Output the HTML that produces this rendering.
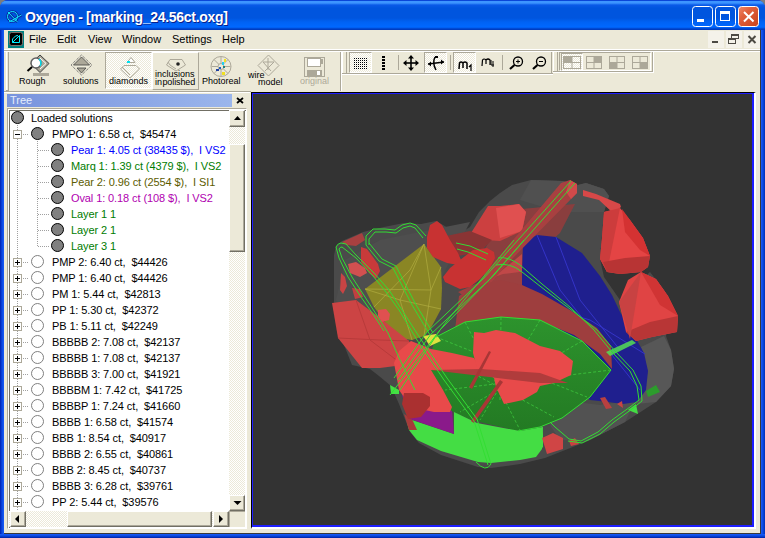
<!DOCTYPE html>
<html><head><meta charset="utf-8">
<style>
*{margin:0;padding:0;box-sizing:border-box}
html,body{width:765px;height:538px;overflow:hidden;background:#7d7d7d}
body{position:relative;font-family:"Liberation Sans",sans-serif;font-size:11px;color:#000}
.a{position:absolute}
svg{position:absolute;left:0;top:0}
#frame{left:0;top:0;width:765px;height:538px;background:#0842d8;border-radius:8px 8px 0 0}
#bl{left:0;top:30px;width:4px;height:508px;background:linear-gradient(90deg,#0020b0,#0a48e0 50%,#1a5cf8)}
#br{left:761px;top:30px;width:4px;height:508px;background:linear-gradient(90deg,#1a5cf8,#0a48e0 50%,#0030b8)}
#bb{left:0;top:534px;width:765px;height:4px;background:linear-gradient(#1a5cf8,#0a48e0 50%,#0020a0)}
#title{left:0;top:0;width:765px;height:30px;border-radius:8px 8px 0 0;background:linear-gradient(#0a46d8 0px,#0a46d8 1px,#3d95ff 1px,#3d95ff 3px,#0a5ae8 5px,#0055de 8px,#0055de 18px,#0062f4 22px,#0068ff 27px,#0058e8 28px,#003cc0 29px,#003cc0 30px)}
#ttext{left:25px;top:9px;font-weight:bold;font-size:14px;color:#fff;text-shadow:1px 1px 0 #0a1e8a;white-space:nowrap;letter-spacing:-0.3px}
#menubar{left:4px;top:30px;width:757px;height:20px;background:#ece9d8}
.mi{top:5px;white-space:nowrap}
#tb{left:4px;top:50px;width:757px;height:41px;background:#ece9d8;border-top:1px solid #fff}
#tree{left:4px;top:91px;width:247px;height:443px;background:#ece9d8}
#view{left:251px;top:91px;width:510px;height:443px;background:#ece9d8}
#vpo{left:251px;top:92px;width:505px;height:437px;border:2px solid #fff;border-top:1px solid #000;border-left:1px solid #000}
#vpi{left:252px;top:93px;width:502px;height:434px;background:#333333;border:1px solid #1e1eff;border-width:1px 2px 2px 1px}
#ttl{left:7px;top:94px;width:225px;height:13px;background:linear-gradient(90deg,#7893dd,#9bb6ec)}
#ttlt{left:10px;top:94px;color:#e6eefc;font-size:11px;line-height:13px}
#list{left:7px;top:108px;width:240px;height:421px;background:#fff;border:1px solid #aca899;border-right-color:#fff;border-bottom-color:#fff;overflow:hidden}
#listi{left:1px;top:1px;width:238px;height:419px;border:1px solid #716f64;border-right-color:#ece9d8;border-bottom-color:#ece9d8}
.tr{white-space:nowrap;line-height:16px;letter-spacing:-0.1px}
</style></head><body>
<div class="a" id="frame"></div>
<div class="a" id="bl"></div><div class="a" id="br"></div><div class="a" id="bb"></div>
<div class="a" id="title"></div>
<div class="a" id="ttext">Oxygen - [marking_24.56ct.oxg]</div>
<div class="a" id="menubar"></div>
<div class="a mi" style="left:29px;top:33px">File</div>
<div class="a mi" style="left:57px;top:33px">Edit</div>
<div class="a mi" style="left:88px;top:33px">View</div>
<div class="a mi" style="left:122px;top:33px">Window</div>
<div class="a mi" style="left:172px;top:33px">Settings</div>
<div class="a mi" style="left:222px;top:33px">Help</div>
<div class="a" id="tb"></div>
<div class="a" style="left:4px;top:49px;width:757px;height:1px;background:#fff"></div>
<div class="a" style="left:4px;top:50px;width:757px;height:1px;background:#aca899"></div>
<div class="a" style="left:4px;top:51px;width:757px;height:1px;background:#fff"></div>
<!-- toolbar 1 grip & edges -->
<div class="a" style="left:6px;top:52px;width:1px;height:39px;background:#fff"></div>
<div class="a" style="left:8px;top:52px;width:1px;height:39px;background:#aca899"></div>
<div class="a" style="left:6px;top:90px;width:3px;height:1px;background:#aca899"></div>
<div class="a" style="left:340px;top:52px;width:1px;height:39px;background:#aca899"></div>
<div class="a" style="left:341px;top:52px;width:1px;height:39px;background:#fff"></div>
<!-- toolbar 2 -->
<div class="a" style="left:342px;top:52px;width:1px;height:21px;background:#fff"></div>
<div class="a" style="left:346px;top:52px;width:1px;height:21px;background:#aca899"></div>
<div class="a" style="left:342px;top:73px;width:211px;height:1px;background:#aca899"></div>
<div class="a" style="left:342px;top:74px;width:211px;height:1px;background:#fff"></div>
<div class="a" style="left:551px;top:52px;width:1px;height:21px;background:#aca899"></div>
<!-- toolbar 3 -->
<div class="a" style="left:553px;top:52px;width:1px;height:21px;background:#fff"></div>
<div class="a" style="left:557px;top:52px;width:1px;height:21px;background:#aca899"></div>
<div class="a" style="left:553px;top:71px;width:101px;height:1px;background:#aca899"></div>
<div class="a" style="left:553px;top:72px;width:101px;height:1px;background:#fff"></div>
<div class="a" style="left:652px;top:52px;width:1px;height:19px;background:#aca899"></div>
<div class="a" style="left:653px;top:52px;width:1px;height:20px;background:#fff"></div>
<style>
.tbt{font-size:9px;line-height:10px;white-space:nowrap;color:#000}
.chk{background-color:#fff;background-image:linear-gradient(45deg,#ece9d8 25%,transparent 25%,transparent 75%,#ece9d8 75%),linear-gradient(45deg,#ece9d8 25%,transparent 25%,transparent 75%,#ece9d8 75%);background-size:2px 2px;background-position:0 0,1px 1px;border:1px solid #aca899;border-right-color:#fff;border-bottom-color:#fff}
.rai{border:1px solid #fff;border-right-color:#aca899;border-bottom-color:#aca899}
</style>
<!-- buttons toolbar 1 -->
<div class="a chk" style="left:105px;top:52px;width:47px;height:37px"></div>
<div class="a rai" style="left:152px;top:52px;width:47px;height:38px"></div>
<div class="a tbt" style="left:19px;top:76px">Rough</div>
<div class="a tbt" style="left:63px;top:76px">solutions</div>
<div class="a tbt" style="left:109px;top:76px">diamonds</div>
<div class="a tbt" style="left:155px;top:69px">inclusions</div>
<div class="a tbt" style="left:155px;top:77px;letter-spacing:-0.1px">in&#8202;polished</div>
<div class="a tbt" style="left:202px;top:76px">Photoreal</div>
<div class="a tbt" style="left:248px;top:70px">wire</div>
<div class="a tbt" style="left:258px;top:77px">model</div>
<div class="a tbt" style="left:300px;top:76px;color:#aca899">original</div>
<!-- toolbar 2 buttons -->
<div class="a chk" style="left:349px;top:52px;width:23px;height:21px"></div>
<div class="a chk" style="left:424px;top:52px;width:23px;height:21px"></div>
<div class="a chk" style="left:453px;top:52px;width:23px;height:21px"></div>
<div class="a" style="left:398px;top:55px;width:1px;height:15px;background:#aca899"></div>
<div class="a" style="left:450px;top:55px;width:1px;height:15px;background:#aca899"></div>
<div class="a" style="left:502px;top:55px;width:1px;height:15px;background:#aca899"></div>
<!-- toolbar 3 -->
<div class="a" style="left:559px;top:52px;width:92px;height:19px;border:1px solid #aca899;border-bottom-color:#fff;border-right-color:#fff"></div>
<div class="a chk" style="left:561px;top:53px;width:22px;height:18px"></div>
<svg width="765" height="538" style="position:absolute;left:0;top:0">
<!-- Rough icon -->
<path d="M40,55 L49,63.5 L40,72.5 L31,63.5 Z" fill="#aca899" stroke="#404040"/>
<path d="M40,58 L46,63.5 L40,69" fill="none" stroke="#fff" stroke-width="1"/>
<rect x="33" y="73" width="16" height="3" fill="#aca899"/>
<circle cx="36" cy="63" r="5" fill="#fff" stroke="#606060" stroke-width="1.5"/>
<path d="M39,59 A5,5 0 0 1 40,66" fill="none" stroke="#00e0f0" stroke-width="1.5"/>
<line x1="32" y1="67" x2="27.5" y2="71" stroke="#000" stroke-width="2"/>
<!-- solutions icon -->
<path d="M81.5,55 L92,65 L81.5,75 L71,65 Z" fill="#ece9d8" stroke="#555" stroke-dasharray="1 1"/>
<path d="M81.5,57 L89.5,65 L73.5,65 Z" fill="#aca899" stroke="#404040" stroke-width="0.8"/>
<path d="M77,68 L86,68 L81.5,73 Z" fill="#aca899" stroke="#404040" stroke-width="0.8"/>
<!-- diamonds icon -->
<path d="M127,62.5 L131,57.5 L135,62.5 Z" fill="#fff" stroke="#aca899"/>
<rect x="127" y="61" width="3" height="2" fill="#00e0f0"/>
<path d="M124,65.5 L136,65.5 L139.5,69 L130,78 L120.5,69 Z" fill="none" stroke="#aca899"/>
<path d="M122,67 L124,69 L130,75" fill="none" stroke="#aca899"/>
<!-- inclusions icon -->
<path d="M170,59.5 L182,59.5 L185.5,65 L176,71 L166.5,65 Z" fill="none" stroke="#aca899"/>
<path d="M168,62 L170,65 L176,69" fill="none" stroke="#aca899"/>
<circle cx="178" cy="64" r="1.8" fill="#222"/>
<!-- Photoreal icon -->
<circle cx="221" cy="66.5" r="10" fill="#ece9d8" stroke="#aca899"/>
<g stroke="#aca899" stroke-width="1"><line x1="221" y1="57" x2="221" y2="76"/><line x1="211.5" y1="66.5" x2="230.5" y2="66.5"/><line x1="214" y1="59.5" x2="228" y2="73.5"/><line x1="228" y1="59.5" x2="214" y2="73.5"/></g>
<circle cx="221" cy="66.5" r="3" fill="#ece9d8" stroke="#aca899"/>
<rect x="224" y="59" width="2" height="3" fill="#f0e020"/><rect x="222" y="62" width="2" height="3" fill="#20d0f0"/><rect x="219" y="67" width="2" height="2" fill="#2060c0"/><rect x="216" y="69" width="3" height="2" fill="#2040a0"/><rect x="222" y="72" width="3" height="3" fill="#f0e020"/><rect x="223" y="66" width="2" height="2" fill="#208080"/>
<!-- wire model icon -->
<path d="M268.5,55 L279,65.5 L268.5,76 L258,65.5 Z" fill="none" stroke="#aca899"/>
<path d="M263,62 L274,62 M263,62 L271,71 M274,62 L265,71 M268,58 L268,70" fill="none" stroke="#aca899"/>
<!-- original floppy -->
<rect x="304.5" y="57.5" width="20" height="19" fill="#ece9d8" stroke="#aca899"/>
<rect x="307.5" y="58.5" width="13" height="8" fill="#fff" stroke="#aca899"/>
<rect x="307" y="70" width="15" height="6" fill="#aca899"/>
<rect x="317" y="71" width="3" height="4" fill="#fff"/>
<rect x="321" y="59" width="2" height="5" fill="#aca899"/>
<!-- grid dots -->
<g fill="#000">
<rect x="354" y="58" width="1" height="1"/><rect x="354" y="60" width="1" height="1"/><rect x="354" y="62" width="1" height="1"/><rect x="354" y="64" width="1" height="1"/><rect x="354" y="66" width="1" height="1"/><rect x="354" y="68" width="1" height="1"/><rect x="356" y="58" width="1" height="1"/><rect x="356" y="60" width="1" height="1"/><rect x="356" y="62" width="1" height="1"/><rect x="356" y="64" width="1" height="1"/><rect x="356" y="66" width="1" height="1"/><rect x="356" y="68" width="1" height="1"/><rect x="358" y="58" width="1" height="1"/><rect x="358" y="60" width="1" height="1"/><rect x="358" y="62" width="1" height="1"/><rect x="358" y="64" width="1" height="1"/><rect x="358" y="66" width="1" height="1"/><rect x="358" y="68" width="1" height="1"/><rect x="360" y="58" width="1" height="1"/><rect x="360" y="60" width="1" height="1"/><rect x="360" y="62" width="1" height="1"/><rect x="360" y="64" width="1" height="1"/><rect x="360" y="66" width="1" height="1"/><rect x="360" y="68" width="1" height="1"/><rect x="362" y="58" width="1" height="1"/><rect x="362" y="60" width="1" height="1"/><rect x="362" y="62" width="1" height="1"/><rect x="362" y="64" width="1" height="1"/><rect x="362" y="66" width="1" height="1"/><rect x="362" y="68" width="1" height="1"/><rect x="364" y="58" width="1" height="1"/><rect x="364" y="60" width="1" height="1"/><rect x="364" y="62" width="1" height="1"/><rect x="364" y="64" width="1" height="1"/><rect x="364" y="66" width="1" height="1"/><rect x="364" y="68" width="1" height="1"/><rect x="366" y="58" width="1" height="1"/><rect x="366" y="60" width="1" height="1"/><rect x="366" y="62" width="1" height="1"/><rect x="366" y="64" width="1" height="1"/><rect x="366" y="66" width="1" height="1"/><rect x="366" y="68" width="1" height="1"/>
<rect x="382" y="56" width="3" height="2"/>
<rect x="382" y="59" width="3" height="2"/>
<rect x="382" y="62" width="3" height="2"/>
<rect x="382" y="65" width="3" height="2"/>
<rect x="382" y="68" width="3" height="2"/>
</g>
<!-- move icon -->
<g stroke="#000" stroke-width="1.6" fill="#000">
<line x1="411" y1="56" x2="411" y2="70"/><line x1="404" y1="63" x2="418" y2="63"/>
</g>
<path d="M411,55 L408,58.5 L414,58.5 Z M411,71 L408,67.5 L414,67.5 Z M403,63 L406.5,60 L406.5,66 Z M419,63 L415.5,60 L415.5,66 Z" fill="#000"/>
<!-- rotate icon -->
<path d="M428,64 L444,62 M435,57 Q432,63 436,70" fill="none" stroke="#000" stroke-width="1.5"/>
<path d="M444,62 L441,59.5 L441,64.5 Z M428,64 L431,61.5 L431,66.5 Z" fill="#000"/>
<rect x="435" y="56" width="3" height="2" fill="#000"/>
<!-- m1 m4 -->
<path d="M459,69 L459.5,63 Q461,61 463,63 L463,68 M463,63 Q465,61 467,63 L467,69" fill="none" stroke="#000" stroke-width="1.5"/>
<path d="M469,67 L471,65 L471,71" fill="none" stroke="#000" stroke-width="1.2"/>
<path d="M482,66 L482.5,60 Q484,58 486,60 L486,64 M486,60 Q488,58 490,60 L490,65" fill="none" stroke="#000" stroke-width="1.2"/>
<path d="M491,60 L491,65 L494,65 M493,61 L493,67" fill="none" stroke="#000" stroke-width="1"/>
<!-- zoom in/out -->
<circle cx="518" cy="61.5" r="4.5" fill="none" stroke="#000" stroke-width="1.3"/>
<line x1="514.5" y1="65" x2="510" y2="69" stroke="#000" stroke-width="2.2"/>
<path d="M516,61.5 L520,61.5 M518,59.5 L518,63.5" stroke="#000" stroke-width="1"/>
<circle cx="541" cy="61.5" r="4.5" fill="none" stroke="#000" stroke-width="1.3"/>
<line x1="537.5" y1="65" x2="533" y2="69" stroke="#000" stroke-width="2.2"/>
<path d="M539,61.5 L543,61.5" stroke="#000" stroke-width="1"/>
<!-- layout icons -->
<g stroke="#aca899" stroke-width="1" fill="none">
<rect x="563.5" y="56.5" width="17" height="12"/><line x1="572" y1="56.5" x2="572" y2="68.5"/><line x1="563.5" y1="62.5" x2="580.5" y2="62.5"/>
<rect x="586.5" y="56.5" width="15" height="12"/><line x1="594" y1="56.5" x2="594" y2="68.5"/><line x1="586.5" y1="62.5" x2="601.5" y2="62.5"/>
<rect x="609.5" y="56.5" width="15" height="12"/><line x1="617" y1="56.5" x2="617" y2="68.5"/><line x1="609.5" y1="62.5" x2="624.5" y2="62.5"/>
<rect x="632.5" y="56.5" width="15" height="12"/><line x1="640" y1="56.5" x2="640" y2="68.5"/><line x1="632.5" y1="62.5" x2="647.5" y2="62.5"/>
</g>
<g fill="#aca899">
<rect x="564" y="57" width="8" height="6"/>
<rect x="594" y="57" width="8" height="6"/>
<rect x="609" y="62" width="8" height="7"/>
<rect x="640" y="62" width="8" height="7"/>
</g>
</svg>

<div class="a" id="tree"></div>
<div class="a" style="left:4px;top:91px;width:247px;height:1px;background:#aca899"></div>
<div class="a" style="left:4px;top:92px;width:246px;height:1px;background:#fff"></div>
<div class="a" id="ttl"></div>
<div class="a" id="ttlt">Tree</div>
<div class="a" id="list"><div class="a" id="listi"></div><div class="a" style="left:-8px;top:-109px;width:765px;height:538px">
<svg width="765" height="538" shape-rendering="crispEdges">
<line x1="17.5" y1="125" x2="17.5" y2="515" stroke="#a0a0a0" stroke-dasharray="1 1"/>
<line x1="37.5" y1="141" x2="37.5" y2="246" stroke="#a0a0a0" stroke-dasharray="1 1"/>
<circle cx="17.5" cy="117.5" r="6" fill="#808080" stroke="#000" stroke-width="1" shape-rendering="auto"/>
<line x1="23" y1="134.5" x2="29" y2="134.5" stroke="#a0a0a0" stroke-dasharray="1 1"/>
<circle cx="37.5" cy="133.5" r="6" fill="#808080" stroke="#000" stroke-width="1" shape-rendering="auto"/>
<rect x="13.5" y="130.5" width="8" height="8" fill="#fff" stroke="#aca899"/>
<line x1="15" y1="134.5" x2="20" y2="134.5" stroke="#000"/>
<line x1="38" y1="150.5" x2="50" y2="150.5" stroke="#a0a0a0" stroke-dasharray="1 1"/>
<circle cx="57.5" cy="149.5" r="6" fill="#808080" stroke="#000" stroke-width="1" shape-rendering="auto"/>
<line x1="38" y1="166.5" x2="50" y2="166.5" stroke="#a0a0a0" stroke-dasharray="1 1"/>
<circle cx="57.5" cy="165.5" r="6" fill="#808080" stroke="#000" stroke-width="1" shape-rendering="auto"/>
<line x1="38" y1="182.5" x2="50" y2="182.5" stroke="#a0a0a0" stroke-dasharray="1 1"/>
<circle cx="57.5" cy="181.5" r="6" fill="#808080" stroke="#000" stroke-width="1" shape-rendering="auto"/>
<line x1="38" y1="198.5" x2="50" y2="198.5" stroke="#a0a0a0" stroke-dasharray="1 1"/>
<circle cx="57.5" cy="197.5" r="6" fill="#808080" stroke="#000" stroke-width="1" shape-rendering="auto"/>
<line x1="38" y1="214.5" x2="50" y2="214.5" stroke="#a0a0a0" stroke-dasharray="1 1"/>
<circle cx="57.5" cy="213.5" r="6" fill="#808080" stroke="#000" stroke-width="1" shape-rendering="auto"/>
<line x1="38" y1="230.5" x2="50" y2="230.5" stroke="#a0a0a0" stroke-dasharray="1 1"/>
<circle cx="57.5" cy="229.5" r="6" fill="#808080" stroke="#000" stroke-width="1" shape-rendering="auto"/>
<line x1="38" y1="246.5" x2="50" y2="246.5" stroke="#a0a0a0" stroke-dasharray="1 1"/>
<circle cx="57.5" cy="245.5" r="6" fill="#808080" stroke="#000" stroke-width="1" shape-rendering="auto"/>
<line x1="23" y1="262.5" x2="29" y2="262.5" stroke="#a0a0a0" stroke-dasharray="1 1"/>
<circle cx="37.5" cy="261.5" r="6" fill="#fff" stroke="#808080" stroke-width="1" shape-rendering="auto"/>
<rect x="13.5" y="258.5" width="8" height="8" fill="#fff" stroke="#aca899"/>
<line x1="15" y1="262.5" x2="20" y2="262.5" stroke="#000"/>
<line x1="17.5" y1="260" x2="17.5" y2="265" stroke="#000"/>
<line x1="23" y1="278.5" x2="29" y2="278.5" stroke="#a0a0a0" stroke-dasharray="1 1"/>
<circle cx="37.5" cy="277.5" r="6" fill="#fff" stroke="#808080" stroke-width="1" shape-rendering="auto"/>
<rect x="13.5" y="274.5" width="8" height="8" fill="#fff" stroke="#aca899"/>
<line x1="15" y1="278.5" x2="20" y2="278.5" stroke="#000"/>
<line x1="17.5" y1="276" x2="17.5" y2="281" stroke="#000"/>
<line x1="23" y1="294.5" x2="29" y2="294.5" stroke="#a0a0a0" stroke-dasharray="1 1"/>
<circle cx="37.5" cy="293.5" r="6" fill="#fff" stroke="#808080" stroke-width="1" shape-rendering="auto"/>
<rect x="13.5" y="290.5" width="8" height="8" fill="#fff" stroke="#aca899"/>
<line x1="15" y1="294.5" x2="20" y2="294.5" stroke="#000"/>
<line x1="17.5" y1="292" x2="17.5" y2="297" stroke="#000"/>
<line x1="23" y1="310.5" x2="29" y2="310.5" stroke="#a0a0a0" stroke-dasharray="1 1"/>
<circle cx="37.5" cy="309.5" r="6" fill="#fff" stroke="#808080" stroke-width="1" shape-rendering="auto"/>
<rect x="13.5" y="306.5" width="8" height="8" fill="#fff" stroke="#aca899"/>
<line x1="15" y1="310.5" x2="20" y2="310.5" stroke="#000"/>
<line x1="17.5" y1="308" x2="17.5" y2="313" stroke="#000"/>
<line x1="23" y1="326.5" x2="29" y2="326.5" stroke="#a0a0a0" stroke-dasharray="1 1"/>
<circle cx="37.5" cy="325.5" r="6" fill="#fff" stroke="#808080" stroke-width="1" shape-rendering="auto"/>
<rect x="13.5" y="322.5" width="8" height="8" fill="#fff" stroke="#aca899"/>
<line x1="15" y1="326.5" x2="20" y2="326.5" stroke="#000"/>
<line x1="17.5" y1="324" x2="17.5" y2="329" stroke="#000"/>
<line x1="23" y1="342.5" x2="29" y2="342.5" stroke="#a0a0a0" stroke-dasharray="1 1"/>
<circle cx="37.5" cy="341.5" r="6" fill="#fff" stroke="#808080" stroke-width="1" shape-rendering="auto"/>
<rect x="13.5" y="338.5" width="8" height="8" fill="#fff" stroke="#aca899"/>
<line x1="15" y1="342.5" x2="20" y2="342.5" stroke="#000"/>
<line x1="17.5" y1="340" x2="17.5" y2="345" stroke="#000"/>
<line x1="23" y1="358.5" x2="29" y2="358.5" stroke="#a0a0a0" stroke-dasharray="1 1"/>
<circle cx="37.5" cy="357.5" r="6" fill="#fff" stroke="#808080" stroke-width="1" shape-rendering="auto"/>
<rect x="13.5" y="354.5" width="8" height="8" fill="#fff" stroke="#aca899"/>
<line x1="15" y1="358.5" x2="20" y2="358.5" stroke="#000"/>
<line x1="17.5" y1="356" x2="17.5" y2="361" stroke="#000"/>
<line x1="23" y1="374.5" x2="29" y2="374.5" stroke="#a0a0a0" stroke-dasharray="1 1"/>
<circle cx="37.5" cy="373.5" r="6" fill="#fff" stroke="#808080" stroke-width="1" shape-rendering="auto"/>
<rect x="13.5" y="370.5" width="8" height="8" fill="#fff" stroke="#aca899"/>
<line x1="15" y1="374.5" x2="20" y2="374.5" stroke="#000"/>
<line x1="17.5" y1="372" x2="17.5" y2="377" stroke="#000"/>
<line x1="23" y1="390.5" x2="29" y2="390.5" stroke="#a0a0a0" stroke-dasharray="1 1"/>
<circle cx="37.5" cy="389.5" r="6" fill="#fff" stroke="#808080" stroke-width="1" shape-rendering="auto"/>
<rect x="13.5" y="386.5" width="8" height="8" fill="#fff" stroke="#aca899"/>
<line x1="15" y1="390.5" x2="20" y2="390.5" stroke="#000"/>
<line x1="17.5" y1="388" x2="17.5" y2="393" stroke="#000"/>
<line x1="23" y1="406.5" x2="29" y2="406.5" stroke="#a0a0a0" stroke-dasharray="1 1"/>
<circle cx="37.5" cy="405.5" r="6" fill="#fff" stroke="#808080" stroke-width="1" shape-rendering="auto"/>
<rect x="13.5" y="402.5" width="8" height="8" fill="#fff" stroke="#aca899"/>
<line x1="15" y1="406.5" x2="20" y2="406.5" stroke="#000"/>
<line x1="17.5" y1="404" x2="17.5" y2="409" stroke="#000"/>
<line x1="23" y1="422.5" x2="29" y2="422.5" stroke="#a0a0a0" stroke-dasharray="1 1"/>
<circle cx="37.5" cy="421.5" r="6" fill="#fff" stroke="#808080" stroke-width="1" shape-rendering="auto"/>
<rect x="13.5" y="418.5" width="8" height="8" fill="#fff" stroke="#aca899"/>
<line x1="15" y1="422.5" x2="20" y2="422.5" stroke="#000"/>
<line x1="17.5" y1="420" x2="17.5" y2="425" stroke="#000"/>
<line x1="23" y1="438.5" x2="29" y2="438.5" stroke="#a0a0a0" stroke-dasharray="1 1"/>
<circle cx="37.5" cy="437.5" r="6" fill="#fff" stroke="#808080" stroke-width="1" shape-rendering="auto"/>
<rect x="13.5" y="434.5" width="8" height="8" fill="#fff" stroke="#aca899"/>
<line x1="15" y1="438.5" x2="20" y2="438.5" stroke="#000"/>
<line x1="17.5" y1="436" x2="17.5" y2="441" stroke="#000"/>
<line x1="23" y1="454.5" x2="29" y2="454.5" stroke="#a0a0a0" stroke-dasharray="1 1"/>
<circle cx="37.5" cy="453.5" r="6" fill="#fff" stroke="#808080" stroke-width="1" shape-rendering="auto"/>
<rect x="13.5" y="450.5" width="8" height="8" fill="#fff" stroke="#aca899"/>
<line x1="15" y1="454.5" x2="20" y2="454.5" stroke="#000"/>
<line x1="17.5" y1="452" x2="17.5" y2="457" stroke="#000"/>
<line x1="23" y1="470.5" x2="29" y2="470.5" stroke="#a0a0a0" stroke-dasharray="1 1"/>
<circle cx="37.5" cy="469.5" r="6" fill="#fff" stroke="#808080" stroke-width="1" shape-rendering="auto"/>
<rect x="13.5" y="466.5" width="8" height="8" fill="#fff" stroke="#aca899"/>
<line x1="15" y1="470.5" x2="20" y2="470.5" stroke="#000"/>
<line x1="17.5" y1="468" x2="17.5" y2="473" stroke="#000"/>
<line x1="23" y1="486.5" x2="29" y2="486.5" stroke="#a0a0a0" stroke-dasharray="1 1"/>
<circle cx="37.5" cy="485.5" r="6" fill="#fff" stroke="#808080" stroke-width="1" shape-rendering="auto"/>
<rect x="13.5" y="482.5" width="8" height="8" fill="#fff" stroke="#aca899"/>
<line x1="15" y1="486.5" x2="20" y2="486.5" stroke="#000"/>
<line x1="17.5" y1="484" x2="17.5" y2="489" stroke="#000"/>
<line x1="23" y1="502.5" x2="29" y2="502.5" stroke="#a0a0a0" stroke-dasharray="1 1"/>
<circle cx="37.5" cy="501.5" r="6" fill="#fff" stroke="#808080" stroke-width="1" shape-rendering="auto"/>
<rect x="13.5" y="498.5" width="8" height="8" fill="#fff" stroke="#aca899"/>
<line x1="15" y1="502.5" x2="20" y2="502.5" stroke="#000"/>
<line x1="17.5" y1="500" x2="17.5" y2="505" stroke="#000"/>
</svg>
<div class="a tr" style="left:31px;top:110px;color:#000">Loaded solutions</div>
<div class="a tr" style="left:52px;top:126px;color:#000">PMPO 1: 6.58 ct,&nbsp; $45474</div>
<div class="a tr" style="left:71px;top:142px;color:#0000ff">Pear 1: 4.05 ct (38435 $),&nbsp; I VS2</div>
<div class="a tr" style="left:71px;top:158px;color:#007c00">Marq 1: 1.39 ct (4379 $),&nbsp; I VS2</div>
<div class="a tr" style="left:71px;top:174px;color:#5c5c00">Pear 2: 0.96 ct (2554 $),&nbsp; I SI1</div>
<div class="a tr" style="left:71px;top:190px;color:#b000b0">Oval 1: 0.18 ct (108 $),&nbsp; I VS2</div>
<div class="a tr" style="left:71px;top:206px;color:#007c00">Layer 1 1</div>
<div class="a tr" style="left:71px;top:222px;color:#007c00">Layer 2 1</div>
<div class="a tr" style="left:71px;top:238px;color:#007c00">Layer 3 1</div>
<div class="a tr" style="left:52px;top:254px;color:#000">PMP 2: 6.40 ct, &nbsp;$44426</div>
<div class="a tr" style="left:52px;top:270px;color:#000">PMP 1: 6.40 ct, &nbsp;$44426</div>
<div class="a tr" style="left:52px;top:286px;color:#000">PM 1: 5.44 ct, &nbsp;$42813</div>
<div class="a tr" style="left:52px;top:302px;color:#000">PP 1: 5.30 ct, &nbsp;$42372</div>
<div class="a tr" style="left:52px;top:318px;color:#000">PB 1: 5.11 ct, &nbsp;$42249</div>
<div class="a tr" style="left:52px;top:334px;color:#000">BBBBB 2: 7.08 ct, &nbsp;$42137</div>
<div class="a tr" style="left:52px;top:350px;color:#000">BBBBB 1: 7.08 ct, &nbsp;$42137</div>
<div class="a tr" style="left:52px;top:366px;color:#000">BBBBB 3: 7.00 ct, &nbsp;$41921</div>
<div class="a tr" style="left:52px;top:382px;color:#000">BBBBM 1: 7.42 ct, &nbsp;$41725</div>
<div class="a tr" style="left:52px;top:398px;color:#000">BBBBP 1: 7.24 ct, &nbsp;$41660</div>
<div class="a tr" style="left:52px;top:414px;color:#000">BBBB 1: 6.58 ct, &nbsp;$41574</div>
<div class="a tr" style="left:52px;top:430px;color:#000">BBB 1: 8.54 ct, &nbsp;$40917</div>
<div class="a tr" style="left:52px;top:446px;color:#000">BBBB 2: 6.55 ct, &nbsp;$40861</div>
<div class="a tr" style="left:52px;top:462px;color:#000">BBB 2: 8.45 ct, &nbsp;$40737</div>
<div class="a tr" style="left:52px;top:478px;color:#000">BBBB 3: 6.28 ct, &nbsp;$39761</div>
<div class="a tr" style="left:52px;top:494px;color:#000">PP 2: 5.44 ct, &nbsp;$39576</div>
</div></div>

<svg width="765" height="538" style="position:absolute;left:0;top:0">
<!-- title icon -->
<g fill="none" stroke="#0a2aa0" stroke-width="2.6">
<circle cx="12.5" cy="16.5" r="5"/><line x1="8" y1="12" x2="17.5" y2="22"/><line x1="9" y1="22" x2="21.5" y2="15"/>
</g>
<g fill="none" stroke="#10e8ff" stroke-width="1">
<circle cx="12.5" cy="16.5" r="5"/><line x1="8" y1="12" x2="17.5" y2="22"/><line x1="9" y1="22" x2="21.5" y2="15"/>
</g>
<!-- title buttons -->
<defs>
<linearGradient id="bb" x1="0" y1="0" x2="1" y2="1"><stop offset="0" stop-color="#6a9ef8"/><stop offset="0.35" stop-color="#3f7ef0"/><stop offset="1" stop-color="#1d56d8"/></linearGradient>
<linearGradient id="rb" x1="0" y1="0" x2="1" y2="1"><stop offset="0" stop-color="#f08a6a"/><stop offset="0.35" stop-color="#e0603c"/><stop offset="1" stop-color="#c8421a"/></linearGradient>
</defs>
<rect x="692.5" y="6.5" width="20" height="20" rx="3" fill="url(#bb)" stroke="#fff"/>
<rect x="715.5" y="6.5" width="20" height="20" rx="3" fill="url(#bb)" stroke="#fff"/>
<rect x="738.5" y="6.5" width="20" height="20" rx="3" fill="url(#rb)" stroke="#fff"/>
<rect x="697" y="19" width="7" height="3" fill="#fff"/>
<rect x="720.5" y="11.5" width="9" height="9" fill="none" stroke="#fff"/><rect x="720" y="11" width="10" height="3" fill="#fff"/>
<path d="M744,12 L753.5,21.5 M753.5,12 L744,21.5" stroke="#fff" stroke-width="2"/>
<!-- menu icon -->
<rect x="8" y="31" width="16" height="17" fill="#008080"/>
<rect x="9.5" y="32.5" width="13" height="13" rx="2" fill="#000" stroke="#806f6a"/>
<path d="M12.5,42.5 L19.5,35.5 L19.5,42.5 Z" fill="none" stroke="#00f0ff" stroke-width="1"/>
<path d="M12.5,42.5 L12.5,39 L15.5,36 L18,35.5" fill="none" stroke="#00f0ff" stroke-width="1"/>
<!-- MDI buttons -->
<rect x="708" y="31" width="16" height="17" fill="#f4f2ea"/>
<rect x="726" y="31" width="16" height="17" fill="#f4f2ea"/>
<rect x="744" y="31" width="16" height="17" fill="#f4f2ea"/>
<rect x="712" y="41" width="6" height="2" fill="#4c4a44"/>
<rect x="731.5" y="34.5" width="7" height="4" fill="none" stroke="#4c4a44"/><rect x="731" y="34" width="8" height="2" fill="#4c4a44"/>
<rect x="728.5" y="38.5" width="7" height="5" fill="#f4f2ea" stroke="#4c4a44"/><rect x="728" y="38" width="8" height="2" fill="#4c4a44"/>
<path d="M748.5,36 L755.5,43 M755.5,36 L748.5,43" stroke="#4c4a44" stroke-width="2"/>
<!-- tree close X -->
<path d="M237,98 L243,103 M243,98 L237,103" stroke="#000" stroke-width="1.8"/>
</svg>
<style>
.dith{background-color:#fff;background-image:linear-gradient(45deg,#ece9d8 25%,transparent 25%,transparent 75%,#ece9d8 75%),linear-gradient(45deg,#ece9d8 25%,transparent 25%,transparent 75%,#ece9d8 75%);background-size:2px 2px;background-position:0 0,1px 1px}
.sbb{background:#ece9d8;border:1px solid #fff;border-right-color:#716f64;border-bottom-color:#716f64;box-shadow:inset -1px -1px 0 #aca899}
</style>
<div class="a dith" style="left:229px;top:110px;width:16px;height:401px"></div>
<div class="a sbb" style="left:229px;top:110px;width:16px;height:17px"></div>
<div class="a sbb" style="left:229px;top:144px;width:16px;height:108px"></div>
<div class="a sbb" style="left:229px;top:495px;width:16px;height:16px"></div>
<div class="a dith" style="left:9px;top:511px;width:220px;height:16px"></div>
<div class="a sbb" style="left:10px;top:511px;width:16px;height:16px"></div>
<div class="a sbb" style="left:67px;top:511px;width:145px;height:16px"></div>
<div class="a sbb" style="left:213px;top:511px;width:16px;height:16px"></div>
<div class="a" style="left:229px;top:511px;width:16px;height:16px;background:#ece9d8;border-left:1px solid #aca899;border-top:1px solid #aca899"></div>
<svg width="765" height="538" style="position:absolute;left:0;top:0">
<path d="M234,120 L241,120 L237.5,116 Z" fill="#000"/>
<path d="M233.5,501 L241.5,501 L237.5,505 Z" fill="#000"/>
<path d="M15,519 L19,515 L19,523 Z" fill="#000"/>
<path d="M223,519 L219,515 L219,523 Z" fill="#000"/>
</svg>
<div class="a" id="view"></div>
<div class="a" id="vpo"></div>
<div class="a" style="left:4px;top:533px;width:757px;height:1px;background:#3a3a3a"></div>
<div class="a" style="left:760px;top:30px;width:1px;height:504px;background:#3a3a3a"></div>
<div class="a" id="vpi"></div>
<svg width="765" height="538" viewBox="0 0 765 538">
<defs><linearGradient id="mg" x1="0" y1="0" x2="0" y2="1"><stop offset="0" stop-color="#2d932d"/><stop offset="1" stop-color="#237a23"/></linearGradient><clipPath id="vc"><rect x="253" y="94" width="499" height="431"/></clipPath></defs>
<g clip-path="url(#vc)">
<!-- stone body -->
<path d="M334,255 L336,246 L342,241 L363,232 L384,227 L404,223 L421,224 L436,221 L450,229 L462,232 L470,227 L479,212 L490,201 L500,193 L512,185 L531,180 L563,181 L578,185 L586,183 L604,189 L609,196 L604,212 L600,259 L604,277 L620,300 L650,272 L664,290 L670,316 L666,336 L671,350 L674,369 L671,386 L656,402 L625,422 L588,441 L545,458 L520,464 L491,468 L478,467 L441,455 L419,443 L410,432 L399,404 L391,386 L379,376 L370,369 L352,365 L336,325 L334,302 Z" fill="#4a4a4a"/>
<path d="M641,347 L664,336 L671,350 L674,369 L671,386 L656,402 L636,404 L648,372 Z" fill="#575757"/>
<path d="M531,180 L563,181 L578,185 L586,183 L604,189 L609,196 L604,212 L560,212 L520,200 Z" fill="#505050"/>
<path d="M560,400 L600,405 L636,400 L625,422 L588,441 L560,440 L550,425 Z" fill="#525252"/>
<path d="M336,300 L345,260 L380,240 L420,232 L470,222 L430,300 L400,330 L370,340 Z" fill="#4e4e4e"/>
<!-- translucent red behind bar -->
<path d="M500,211 L575,204 L560,233 L522,267 L500,276 L470,275 L490,240 Z" fill="#8a3e3e"/>
<path d="M495,276 L522,254 L522,285 L500,280 Z" fill="#c04848"/>
<!-- lower dark red region -->
<path d="M458,292 L480,282 L503,274 L527,271 L545,290 L512,290 L470,300 Z" fill="#9c4040"/>
<!-- yellow pear 2 -->
<path d="M424,244 L441,267 L442,288 L441,309 L432,326 L424,336 L412,340 L399,338 L390,329 L374,307 L365,289 Z" fill="#8a8624"/>
<path d="M424,244 L431,290 L424,336 M365,289 L431,290 L441,267 M424,244 L400,300 L412,340 M365,289 L400,300 L441,309 M424,244 L410,270 L374,307" fill="none" stroke="#b0ac40" stroke-width="1" opacity="0.7"/>
<!-- blue pear -->
<path d="M523,242 L537,235 L556,237 L582,253 L600,276 L612,295 L620,312 L634,335 L644,353 L648,371 L646,390 L637,402 L623,404 L608,402 L590,400 L570,380 L540,330 L522,300 L522,276 Z" fill="#1f1f8e"/>
<path d="M537,235 L560,290 L600,340 L640,390 M556,237 L580,300 L620,350 M523,300 L590,320 L645,354" fill="none" stroke="#3434c8" stroke-width="1"/>
<!-- red cone pieces top -->
<path d="M471,233 L488,206 L500,206 L519,204 L526,212 L522,231 L500,241 L471,239 Z" fill="#cc4040"/>
<path d="M496,208 L519,204 L526,212 L522,231 L500,238 Z" fill="#e05050"/>
<!-- red bar top diagonal -->
<path d="M561,183 L570,180 L577,184 L577,193 L513,258 L480,295 L470,300 L464,300 L498,258 Z" fill="#a84040"/>
<path d="M570,180 L577,184 L577,193 L571,199 L566,192 Z" fill="#d04a4a"/>
<path d="M446,236 L470,231 L492,240 L480,252 L458,256 Z" fill="#8a3434"/>
<!-- big red petal left -->
<path d="M427,237 L430,225 L437,221 L442,225 L450,240 L458,253 L461,260 L458,265 L447,263 L433,257 L427,248 Z" fill="#c83232"/>
<!-- heart red -->
<path d="M443,277 L450,268 L460,260 L473,250 L487,248 L494,252 L495,258 L490,268 L480,279 L470,287 L460,289 L445,282 Z" fill="#c83232"/>
<!-- dark red band -->
<path d="M459,296 L476,286 L500,280 L522,285 L542,294 L570,310 L597,328 L611,346 L612,369 L600,354 L574,335 L537,320 L500,318 L467,330 L455,330 Z" fill="#9e3e3e"/>
<!-- green marquise -->
<path d="M428,362 L436,337 L465,322 L501,317 L540,320 L582,341 L611,370 L590,397 L562,418 L540,427 L518,431 L484,423 L469,419 L445,408 L428,372 Z" fill="url(#mg)"/>
<g fill="none" stroke="#44dd44" stroke-width="1" opacity="0.6" stroke-dasharray="3 2">
<path d="M465,322 L520,430 M501,317 L500,400 M540,320 L480,420 M582,341 L460,412 M611,370 L445,390 M436,337 L587,397 M430,350 L554,417"/>
</g>
<!-- bright green -->
<path d="M406,418 L454,434 L454,412 L477,423 L520,431 L543,427 L542,449 L536,457 L520,460 L491,463 L478,462 L441,451 L417,440 L409,430 Z" fill="#44dd44"/>
<path d="M404,414 L412,419 L417,430 L409,430 Z" fill="#a83a3a"/>
<path d="M543,427 L543,447 L540,450 Z" fill="#44dd44"/>
<!-- purple -->
<path d="M402,395 L452,411 L454,434 L410,419 Z" fill="#8a1a8a"/>
<!-- left big translucent red -->
<path d="M332,303 L356,300 L380,318 L409,341 L415,356 L403,365 L380,368 L362,368 L338,338 Z" fill="#cc4444"/>
<path d="M356,300 L370,340 L403,365 M338,338 L380,340 L409,341" fill="none" stroke="#b83a3a" stroke-width="1"/>
<!-- small red pieces left -->
<path d="M342,242 L362,233 L365,240 L356,246 L347,245 Z" fill="#a84040"/>
<path d="M361,247 L367,249 L378,264 L380,271 L376,279 L369,273 L361,262 Z" fill="#c83a3a"/>
<path d="M348,264 L356,262 L365,268 L367,273 L360,277 L350,273 Z" fill="#d25050"/>
<path d="M341,273 L345,277 L347,286 L343,294 L340,290 Z" fill="#c84444"/>
<path d="M352,288 L360,289 L363,297 L355,299 Z" fill="#c04040"/>
<path d="M378,310 L386,309 L390,314 L389,320 L382,322 L378,316 Z" fill="#e05050"/>
<!-- center red blob left -->
<path d="M394,363 L399,351 L411,341 L431,349 L452,353 L474,358 L481,370 L431,370 L443,390 L452,407 L450,412 L434,412 L411,407 L399,390 Z" fill="#e84a4a"/>
<!-- center red blob right -->
<path d="M474,332 L484,333 L496,330 L515,333 L540,346 L560,351 L573,361 L571,375 L554,383 L540,386 L537,392 L523,400 L504,404 L496,387 L494,378 L484,370 L477,368 L473,353 Z" fill="#e84a4a"/>
<!-- spear edge -->
<path d="M431,370 L481,369 L540,373 L568,383 L540,383 Z" fill="#b03c3c"/>
<path d="M469,387 L489,351 L491,352 L472,389 Z" fill="#a83636"/>
<path d="M471,421 L500,380 L503,382 L474,423 Z" fill="#a83636"/>
<!-- dark red lump over purple -->
<path d="M404,393 L423,393 L430,397 L430,406 L421,417 L408,419 L402,404 Z" fill="#aa3030"/>
<!-- red right pieces -->
<path d="M583,190 L596,194 L620,204 L621,207 L613,213 L599,200 L583,196 Z" fill="#d84848"/>
<path d="M604,212 L620,208 L630,220 L643,238 L650,256 L648,267 L641,272 L620,274 L607,272 L600,259 L602,238 Z" fill="#e44444"/>
<path d="M604,212 L620,208 L607,272 L600,259 L602,238 Z" fill="#cc3c3c"/>
<path d="M622,209 L630,220 L643,238 L650,256 L640,250 L625,232 Z" fill="#d43232"/>
<path d="M603,262 L625,258 L650,256 L648,267 L641,272 L620,274 L607,272 Z" fill="#b83434"/>
<path d="M619,302 L628,280 L641,272 L656,279 L668,296 L678,316 L677,332 L652,337 L636,341 L626,332 Z" fill="#e04444"/>
<path d="M641,272 L656,279 L668,296 L678,316 L660,305 Z" fill="#d03434"/>
<path d="M626,332 L650,322 L678,316 L677,332 L652,337 L636,341 Z" fill="#b83636"/>
<path d="M641,272 L630,339 L619,302 Z" fill="#c84242"/>

<path d="M542,438 L553,433 L563,438 L563,449 L547,454 Z" fill="#d04545"/>
<path d="M569,441 L575,438 L579,444 L571,446 Z" fill="#cc4040"/>
<path d="M600,398 L605,397 L612,408 L606,409 Z" fill="#b84040"/>
<path d="M617,404 L622,401 L623,408 Z" fill="#c84444"/>
<path d="M390,385 L399,390 L399,394 L391,394 Z" fill="#44e044"/>
<path d="M606,352 L632,340 L636,343 L610,356 Z" fill="#55dd55" opacity="0.85"/>
<path d="M423,336 L436,334 L441,341 L430,346 Z" fill="#e0e040"/>
<path d="M646,391 L656,385 L660,392 L648,397 Z" fill="#2c9c2c"/>
<path d="M628,410 L636,404 L638,414 Z" fill="#44dd44"/>
<!-- wire lines -->
<g fill="none" stroke="#33dd33" stroke-width="1">
<path d="M384,331 L373,314 L361,297 L348,277 L339,258 L336,247 Q338,243 341,243 L346,244 L356,255 L374,273 L389,290 L402,310 L420,338 L447,378 L477,419 L491,464 Q486,473 476,462"/>
<path d="M388,333 L376,314 L365,297 L352,277 L342,258 L339,249 Q340,247 342,247 L356,258 L373,276 L386,292 L399,310 L417,340 L444,380 L474,421 L488,465"/>
<path d="M388,333 L400,360 L415,390"/>
<path d="M366,245 L366,236 L373,229 L385,229 L395,230 L402,225 L410,223 L416,225 L426,236"/>
<path d="M369,245 L369,239 L375,232 L386,232 L396,233 L403,228 L410,226 L415,228 L423,238"/>
<path d="M366,245 L379,261 L393,268 L412,305 L430,335"/>
<path d="M369,243 L382,259 L396,266 L415,303 L433,333"/>
<path d="M575,183 L489,280 L431,334 L398,380"/>
<path d="M571,181 L484,278 L427,332 L394,378"/>
<path d="M514,240 L450,317 L390,395"/>
<path d="M524,240 L494,275 L440,330 L400,390"/>
<path d="M498,258 Q508,256 520,265 L542,284 L570,307 L594,330 L612,352 L630,371 L637,386 L639,400 L630,407 L612,420 L598,432 L581,441 L569,439 L555,427 L550,422"/>
<path d="M496,265 Q510,262 522,272 L545,290 L574,312 L597,330 L615,351 L633,370 L641,386 L642,401 L632,409 L614,422 L600,434 L582,443 L568,441"/>
<path d="M436,337 L465,322 L501,317 L540,320 L582,341 L611,370 L590,397 L562,418 L540,427 L518,431"/>

<path d="M456,243 L470,246 L488,254"/>
<path d="M457,249 L468,252 L486,260"/>
</g>
</g>
</svg>

</body></html>
